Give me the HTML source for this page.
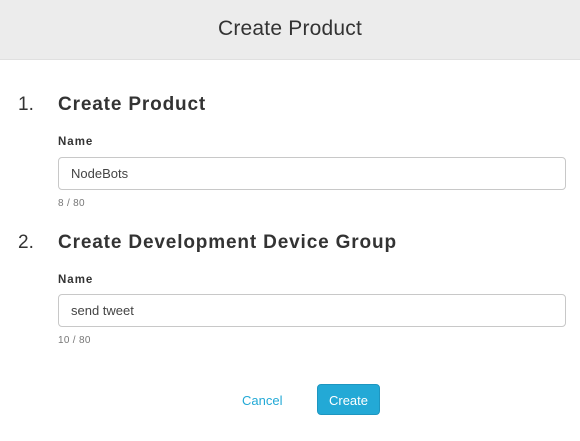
<!DOCTYPE html>
<html><head><style>
*{margin:0;padding:0;box-sizing:border-box}
body{width:580px;height:441px;background:#fff;font-family:"Liberation Sans",sans-serif;color:#333;position:relative;overflow:hidden}
.hdr{position:absolute;left:0;top:0;width:580px;height:60px;background:#ececec;border-bottom:1px solid #e0e0e0;text-align:center;font-size:21px;line-height:57px;color:#333;letter-spacing:0.2px}
.a{position:absolute}
.num{font-size:19px;color:#333}
.h{font-size:19px;font-weight:bold;letter-spacing:0.85px;color:#333}
.lbl{font-size:11.5px;font-weight:bold;letter-spacing:1px;color:#333}
.inp{left:58px;width:508px;height:33px;border:1px solid #c8c8c8;border-radius:4px;font-size:13px;padding-left:12px;line-height:31px;color:#444}
.cnt{font-size:10px;color:#777;letter-spacing:0.3px}
.btn{left:317px;top:384px;width:63px;height:31px;background:#23a9d6;border:1px solid #1e96c0;border-radius:4px;color:#fff;font-size:13px;text-align:center;line-height:31px}
</style></head><body>
<div class="hdr">Create Product</div>
<div class="a num" style="left:18px;top:94px">1.</div>
<div class="a h" style="left:58px;top:94px">Create Product</div>
<div class="a lbl" style="left:58px;top:136px">Name</div>
<div class="a inp" style="top:157px">NodeBots</div>
<div class="a cnt" style="left:58px;top:198px">8 / 80</div>
<div class="a num" style="left:18px;top:232px">2.</div>
<div class="a h" style="left:58px;top:232px">Create Development Device Group</div>
<div class="a lbl" style="left:58px;top:274px">Name</div>
<div class="a inp" style="top:294px">send tweet</div>
<div class="a cnt" style="left:58px;top:335px">10 / 80</div>
<div class="a" style="left:242px;top:393px;font-size:13px;color:#23a9d6">Cancel</div>
<div class="a btn">Create</div>
</body></html>
